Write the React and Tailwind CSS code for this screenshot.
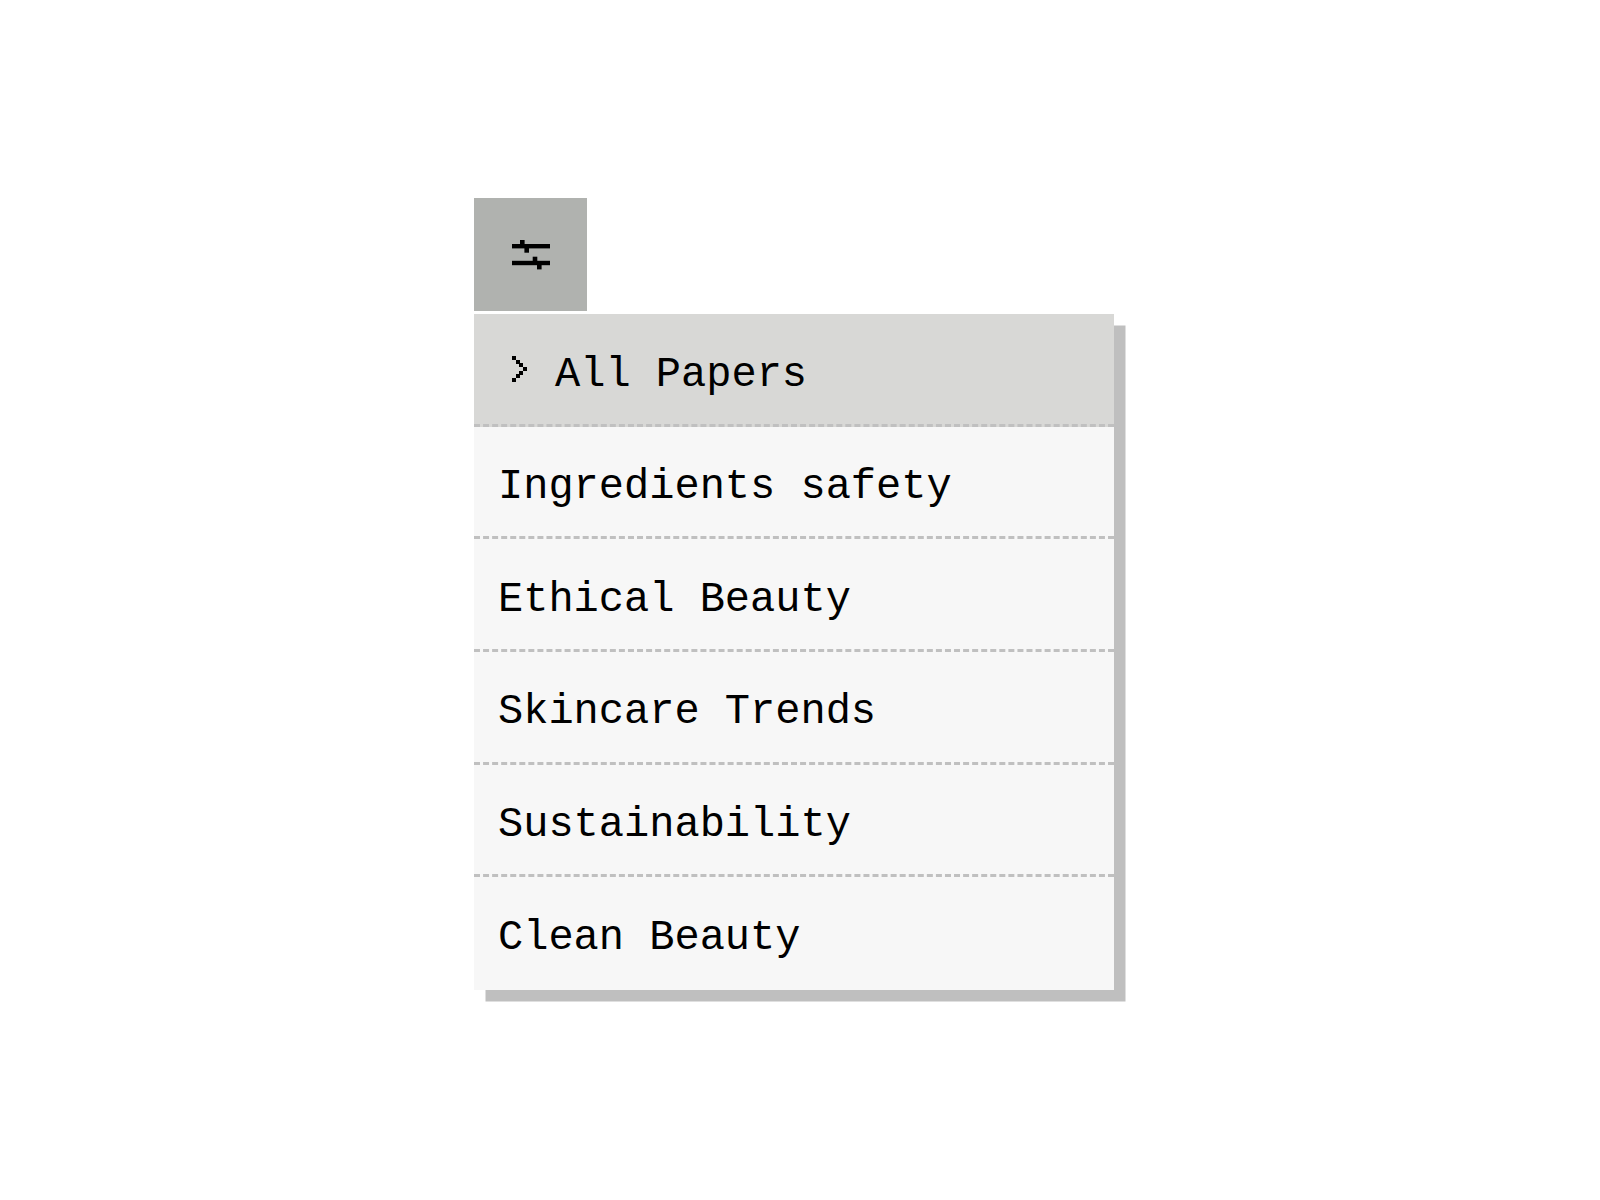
const ITEMS = ['Ingredients safety', 'Ethical Beauty', 'Skincare Trends', 'Sustainability', 'Clean Beauty'];

const SlidersIcon = () => (
  <svg width="38" height="30" viewBox="0 0 38 30" fill="#000">
    <rect x="0" y="4" width="38" height="4.4" />
    <rect x="8" y="0" width="4.6" height="5" />
    <rect x="12.4" y="8" width="4.6" height="4.7" />
    <rect x="0" y="20.8" width="38" height="4.4" />
    <rect x="20.7" y="16.7" width="4.6" height="5" />
    <rect x="25" y="25" width="4.6" height="4.4" />
  </svg>
);

const ChevronIcon = () => (
  <svg width="15" height="26" viewBox="0 0 15 26" fill="#000" className="shrink-0">
    <rect x="0" y="0" width="4" height="4" />
    <rect x="4" y="4" width="4" height="4" />
    <rect x="7" y="7" width="4" height="4" />
    <rect x="11" y="11" width="4" height="4" />
    <rect x="7" y="15" width="4" height="4" />
    <rect x="4" y="18" width="4" height="4" />
    <rect x="0" y="22" width="4" height="4" />
  </svg>
);

export default function App() {
  return (
    <div className="min-h-[1200px] bg-white pl-[474px] pt-[198px] font-['Liberation_Mono',monospace] text-[42px] text-black">
      <button className="flex h-[113px] w-[113px] items-center justify-center bg-[#b0b2af]">
        <SlidersIcon />
      </button>
      <ul className="mt-[3px] w-[640px] bg-[#f7f7f7] shadow-[11.5px_11.5px_0_0_#bfbfbf]">
        <li className="flex h-[112.67px] items-center border-b-[3px] border-dashed border-[#c0c0c0] bg-[#d8d8d6] pl-[38px]">
          <ChevronIcon />
          <span className="ml-[28px] pt-[14px]">All Papers</span>
        </li>
        {ITEMS.map((item, i) => (
          <li
            key={item}
            className={`flex h-[112.67px] items-center border-b-[3px] border-dashed pl-[24px] pt-3 ${i < ITEMS.length - 1 ? 'border-[#c0c0c0]' : 'border-transparent'}`}
          >
            {item}
          </li>
        ))}
      </ul>
    </div>
  );
}
